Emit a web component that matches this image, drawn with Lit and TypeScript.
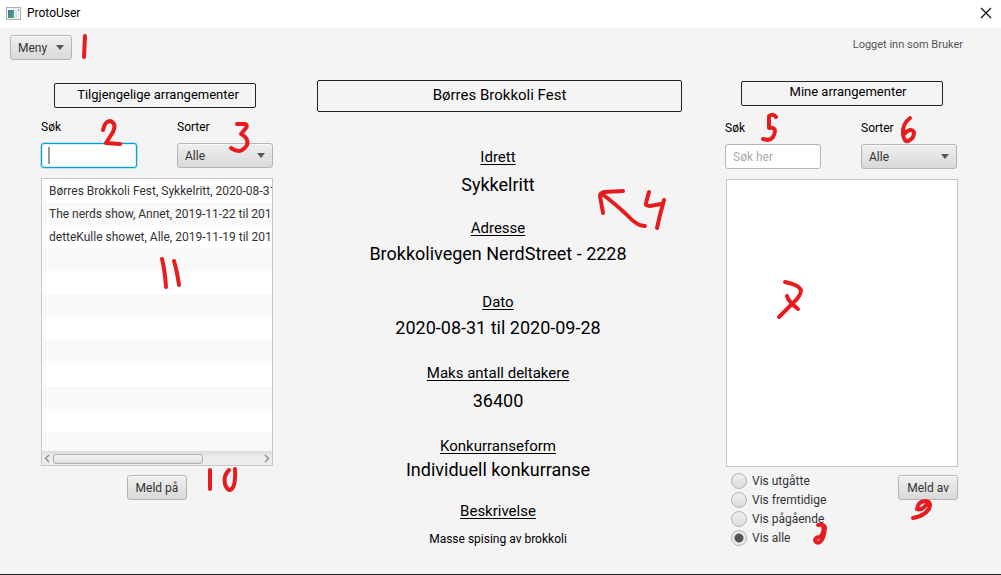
import { LitElement, html, css, svg } from "lit";
import { customElement, property } from "lit/decorators.js";
import { classMap } from "lit/directives/class-map.js";

const strokes = {
  menu: ["M85 36L84 57"],
  left: [
    "M103 130Q105 121 110 121Q117 123 113 132L106 143L120 144",
    "M237 124H245Q248 125 246 128L241 134Q249 138 247 145Q241 155 231 148",
    "M210 470V489",
    "M229 470Q223 476 225 484Q227 490 230 490Q236 488 235 469",
    "M162 259Q165 271 166 287",
    "M174 261Q177 271 179 285",
  ],
  center: [
    "M623 191L604 192Q600 193 600 196L603 213M602 194Q613 202 626 214Q638 227 645 226",
    "M649 192L646 203Q645 206 650 206L661 204M664 200L660 215L657 228",
  ],
  right: [
    "M776 117Q773 113 769 116L769 128Q775 127 775 131Q774 139 768 140L763 139",
    "M910 118Q902 124 903 134Q904 142 908 141Q914 139 914 132Q911 127 904 134",
    "M785 282Q799 285 801 290Q801 296 793 303L779 317M787 296Q788 301 798 309",
    "M818 525Q825 524 825 528Q824 539 820 542Q816 544 815 540Q816 537 820 537Q825 532 823 526",
    "M917 509Q918 501 926 501Q932 502 929 509Q924 516 913 518M917 509Q922 511 928 503",
  ],
};

@customElement("pen-marks")
class PenMarks extends LitElement {
  @property({ attribute: false }) paths: string[] = [];
  @property({ type: Number }) ox = 0;
  @property({ type: Number }) oy = 0;
  static styles = css`
    :host { position: absolute; top: 0; left: 0; pointer-events: none; }
    svg { display: block; width: 1px; height: 1px; overflow: visible; }
    path { fill: none; stroke: #e81c1e; stroke-width: 4; stroke-linecap: round; stroke-linejoin: round; }
  `;
  render() {
    return html`<svg aria-hidden="true"><g transform="translate(${-this.ox} ${-this.oy})">
      ${this.paths.map((d) => svg`<path d=${d} />`)}
    </g></svg>`;
  }
}

@customElement("app-root")
class AppRoot extends LitElement {
  static styles = css`
    :host {
      display: flex;
      flex-direction: column;
      box-sizing: border-box;
      min-height: 100vh;
      background: #f4f4f4;
      border-bottom: 1px solid #222;
      color: #000;
      font: 12px/16px Roboto, "Open Sans", sans-serif;
    }
    * { box-sizing: border-box; }
    h1, h2, dl, dt, dd, ul, p, fieldset { margin: 0; padding: 0; border: 0; font-weight: 400; }
    button, input, select { font: inherit; color: #333; }

    .titlebar {
      display: flex;
      align-items: center;
      gap: 6px;
      height: 28px;
      padding: 0 9px 2px 6px;
      background: #fff;
    }
    .titlebar h1 { flex: 1; font-size: 12px; line-height: 16px; }
    .titlebar svg { display: block; }
    .close { padding: 0; border: 0; background: none; }

    .toolbar {
      position: relative;
      display: flex;
      justify-content: space-between;
      align-items: flex-start;
      padding: 7px 38px 0 10px;
      height: 52px;
    }
    .user { font-size: 11px; line-height: 20px; color: #555; }

    .control {
      height: 25px;
      padding: 0 7px;
      border: 1px solid #b5b5b5;
      border-radius: 3px;
      background: linear-gradient(#efefef, #d9d9d9);
      box-shadow: inset 0 1px #fafafa;
    }
    .menu { display: flex; align-items: center; gap: 9px; }

    main {
      display: grid;
      grid-template-columns: 232px minmax(0, 1fr) 232px;
      gap: 44px;
      padding: 0 43px 0 41px;
    }
    section { position: relative; }
    .left { padding-top: 3px; }
    .right { padding-top: 1px; }

    .title {
      margin: 0 17px 0 13px;
      height: 25px;
      border: 1px solid #222;
      border-radius: 2px;
      font-size: 13px;
      line-height: 22px;
      text-align: center;
    }
    .left .title { padding-left: 6px; }
    .right .title { margin: 0 15px; padding-left: 12px; line-height: 20px; }
    .center .title { margin: 0; height: 32px; font-size: 15px; line-height: 28px; }

    .filters { display: flex; justify-content: space-between; padding-top: 11px; }
    .right .filters { padding-top: 14px; margin: 0 1px 0 -1px; }
    .field { display: flex; flex-direction: column; gap: 8px; width: 96px; }
    .box { position: relative; display: block; }
    .box input, .box select { display: block; width: 100%; height: 25px; outline: 0; appearance: none; }
    .box input { padding: 0 7px; border: 1px solid #b5b5b5; border-radius: 3px; background: #fff; }
    .box input::placeholder { color: #aaa; opacity: 1; }
    .box input.active { border-color: #039ed3; box-shadow: 0 0 0 1px #b9e2f1, inset 0 0 0 1px #d5eef7; }
    .cursor { position: absolute; left: 7px; top: 4px; width: 2px; height: 17px; background: #999; }
    .box .arrow { position: absolute; right: 8px; top: 10px; pointer-events: none; }
    .arrow { display: block; width: 8px; height: 5px; fill: #555; }

    .list {
      display: flex;
      flex-direction: column;
      height: 288px;
      margin-top: 10px;
      border: 1px solid #c8c8c8;
      background: #fff;
    }
    ul {
      flex: 1;
      min-height: 0;
      overflow: hidden;
      list-style: none;
      background: repeating-linear-gradient(#fff 0 23px, #f9f9f9 23px 46px);
      color: #333;
    }
    li { height: 23px; padding-left: 7px; line-height: 24px; white-space: nowrap; }
    .scroll {
      display: flex;
      align-items: center;
      gap: 3px;
      height: 14px;
      padding: 0 2px;
      border-top: 1px solid #dcdcdc;
      background: linear-gradient(#dedede, #ececec 4px);
    }
    .scroll svg { width: 6px; height: 9px; fill: none; stroke: #888; stroke-width: 1.3; }
    .track { flex: 1; }
    .thumb { width: 72%; height: 10px; border: 1px solid #b0b0b0; border-radius: 3px; background: linear-gradient(#f3f3f3, #dfdfdf); }

    .below { display: flex; justify-content: center; padding-top: 9px; }
    .below .control { padding: 0 8px; }
    .right .below { justify-content: space-between; align-items: flex-start; padding: 6px 0 0 5px; }
    .right .below .control { margin-top: 2px; }
    fieldset { display: flex; flex-direction: column; gap: 3px; }
    .choice { display: flex; align-items: center; gap: 5px; height: 16px; color: #333; }
    .choice input {
      appearance: none;
      flex: none;
      width: 16px;
      height: 16px;
      margin: 0;
      border: 1px solid #b5b5b5;
      border-radius: 50%;
      background: linear-gradient(#efefef, #dcdcdc);
    }
    .choice input:checked { background: radial-gradient(circle, #555 0 4px, #ececec 5px); }

    dl { display: grid; grid-template-rows: 71px 74px 71px 73px 65px 48px; padding-top: 35px; text-align: center; }
    dl div { display: flex; flex-direction: column; gap: 4px; padding-right: 3px; }
    dt { font-size: 15px; line-height: 20px; text-decoration: underline; text-underline-offset: 2px; }
    dd { font-size: 18px; line-height: 24px; }
    dl .tight { gap: 2px; }
    dl .loose { gap: 6px; }
    dd.small { font-size: 12px; line-height: 24px; }
  `;

  arrow() {
    return html`<svg class="arrow" viewBox="0 0 8 5" aria-hidden="true"><path d="M0 0H8L4 5Z" /></svg>`;
  }

  filters(side: string, active: boolean) {
    return html`<div class="filters">
      <label class="field" for="search-${side}">Søk
        <span class="box">
          <input id="search-${side}" type="text" class=${classMap({ active })} placeholder=${active ? "" : "Søk her"} />
          ${active ? html`<span class="cursor"></span>` : ""}
        </span>
      </label>
      <label class="field" for="sort-${side}">Sorter
        <span class="box">
          <select id="sort-${side}" class="control"><option>Alle</option></select>${this.arrow()}
        </span>
      </label>
    </div>`;
  }

  render() {
    const events = [
      "Børres Brokkoli Fest, Sykkelritt, 2020-08-31",
      "The nerds show, Annet, 2019-11-22 til 201",
      "detteKulle showet, Alle, 2019-11-19 til 201",
    ];
    const details = [
      ["Idrett", "Sykkelritt", "loose"],
      ["Adresse", "Brokkolivegen NerdStreet - 2228", ""],
      ["Dato", "2020-08-31 til 2020-09-28", ""],
      ["Maks antall deltakere", "36400", "loose"],
      ["Konkurranseform", "Individuell konkurranse", "tight"],
      ["Beskrivelse", "Masse spising av brokkoli", "loose"],
    ];
    const choices = ["Vis utgåtte", "Vis fremtidige", "Vis pågående", "Vis alle"];
    return html`
      <header class="titlebar">
        <svg width="15" height="13" viewBox="0 0 15 13" aria-hidden="true">
          <defs><linearGradient id="pane" x1="0" y1="0" x2="1" y2="1"><stop stop-color="#3f78a8" /><stop offset="1" stop-color="#55a878" /></linearGradient></defs>
          <rect x=".5" y=".5" width="14" height="12" fill="#f2f4f5" stroke="#a9b1b5" />
          <rect x="2" y="3" width="6" height="8" fill="url(#pane)" />
          <rect x="9" y="3" width="2" height="8" fill="#dce3e8" />
          <rect x="12" y="2" width="1" height="2" fill="#58a184" />
        </svg>
        <h1>ProtoUser</h1>
        <button class="close" aria-label="Lukk">
          <svg width="12" height="12" viewBox="0 0 12 12"><path d="M1 1L11 11M11 1L1 11" stroke="#111" stroke-width="1.2" /></svg>
        </button>
      </header>
      <div class="toolbar">
        <button class="control menu" aria-haspopup="menu">Meny ${this.arrow()}</button>
        <p class="user">Logget inn som Bruker</p>
        <pen-marks .paths=${strokes.menu} oy="28"></pen-marks>
      </div>
      <main>
        <section class="left">
          <h2 class="title">Tilgjengelige arrangementer</h2>
          ${this.filters("left", true)}
          <div class="list">
            <ul>${events.map((e) => html`<li>${e}</li>`)}</ul>
            <div class="scroll">
              <svg viewBox="0 0 6 9"><path d="M5 1L1.500 4.500L5 8" /></svg>
              <div class="track"><div class="thumb"></div></div>
              <svg viewBox="0 0 6 9"><path d="M1 1L4.500 4.500L1 8" /></svg>
            </div>
          </div>
          <div class="below"><button class="control">Meld på</button></div>
          <pen-marks .paths=${strokes.left} ox="41" oy="80"></pen-marks>
        </section>
        <section class="center">
          <h2 class="title">Børres Brokkoli Fest</h2>
          <dl>${details.map(([k, v, c]) => html`<div class=${c}><dt>${k}</dt><dd class=${classMap({ small: k === "Beskrivelse" })}>${v}</dd></div>`)}</dl>
          <pen-marks .paths=${strokes.center} ox="317" oy="80"></pen-marks>
        </section>
        <section class="right">
          <h2 class="title">Mine arrangementer</h2>
          ${this.filters("right", false)}
          <div class="list"></div>
          <div class="below">
            <fieldset aria-label="Vis">
              ${choices.map((c, i) => html`<label class="choice"><input type="radio" name="show" .checked=${i === 3} />${c}</label>`)}
            </fieldset>
            <button class="control">Meld av</button>
          </div>
          <pen-marks .paths=${strokes.right} ox="726" oy="80"></pen-marks>
        </section>
      </main>
    `;
  }
}
